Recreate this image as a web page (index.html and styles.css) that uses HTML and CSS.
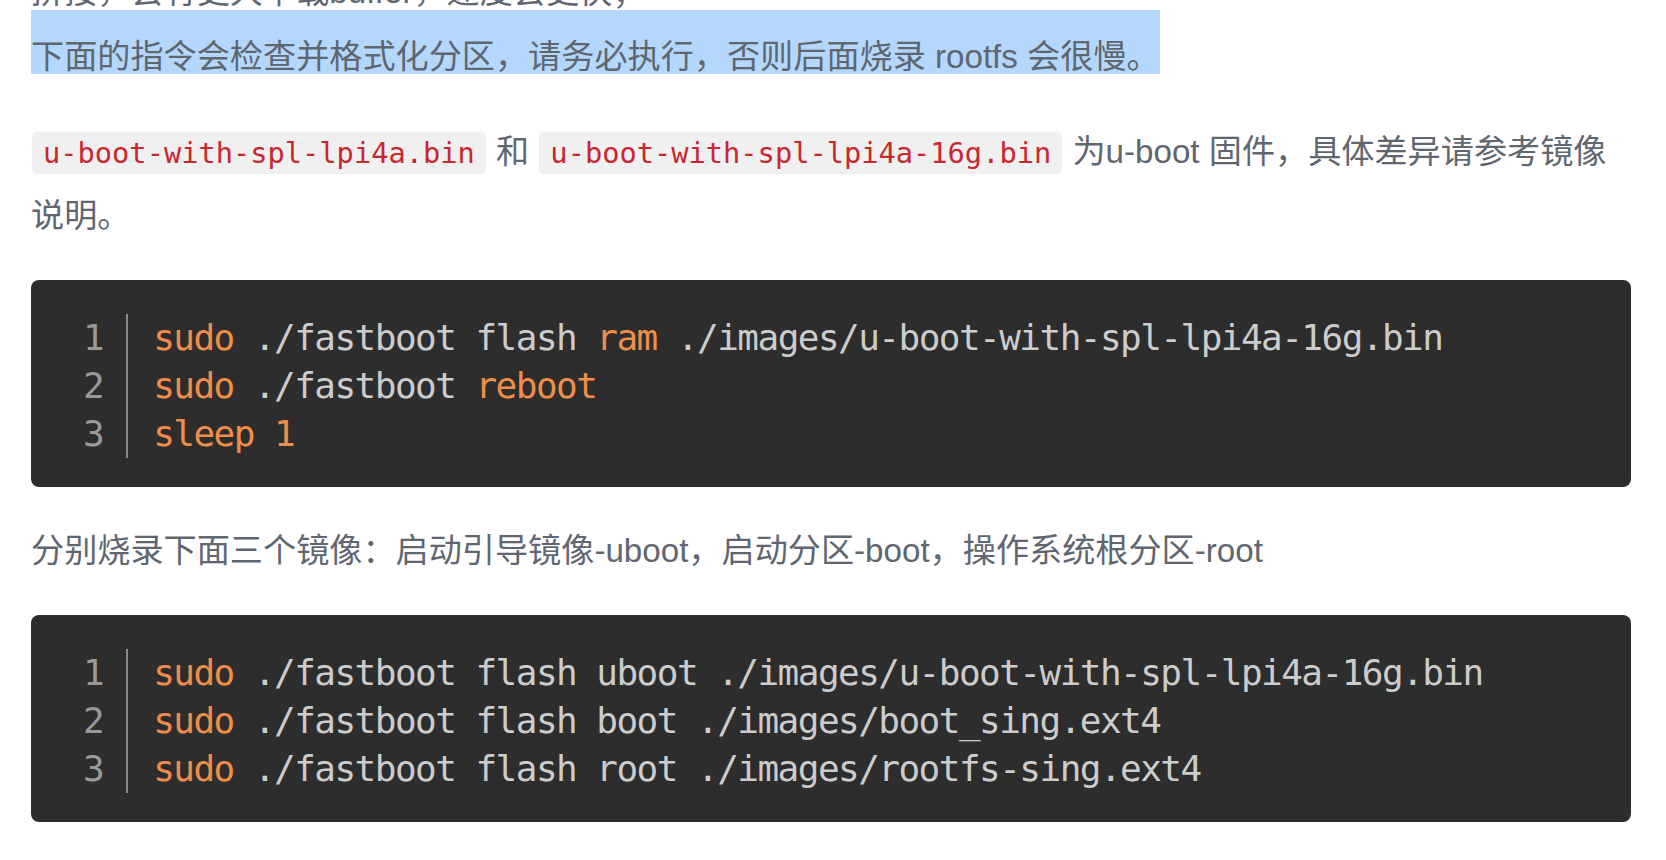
FILE: index.html
```html
<!DOCTYPE html>
<html lang="zh-CN">
<head>
<meta charset="utf-8">
<title>烧录镜像</title>
<link rel="stylesheet" href="styles.css">
</head>
<body>
<div class="doc">
  <p class="para">拼接，会有更大下载buffer，速度会更快；<br><span class="sel">下面的指令会检查并格式化分区，请务必执行，否则后面烧录 rootfs 会很慢。</span></p>
  <p class="para"><code class="ic">u-boot-with-spl-lpi4a.bin</code> 和 <code class="ic">u-boot-with-spl-lpi4a-16g.bin</code> 为u-boot 固件，具体差异请参考镜像说明。</p>
  <div class="code">
    <div class="gutter"><span>1</span><span>2</span><span>3</span></div>
    <pre class="lines"><span class="k">sudo</span> ./fastboot flash <span class="k">ram</span> ./images/u-boot-with-spl-lpi4a-16g.bin
<span class="k">sudo</span> ./fastboot <span class="k">reboot</span>
<span class="k">sleep</span> <span class="k">1</span></pre>
  </div>
  <p class="para">分别烧录下面三个镜像：启动引导镜像-uboot，启动分区-boot，操作系统根分区-root</p>
  <div class="code">
    <div class="gutter"><span>1</span><span>2</span><span>3</span></div>
    <pre class="lines"><span class="k">sudo</span> ./fastboot flash uboot ./images/u-boot-with-spl-lpi4a-16g.bin
<span class="k">sudo</span> ./fastboot flash boot ./images/boot_sing.ext4
<span class="k">sudo</span> ./fastboot flash root ./images/rootfs-sing.ext4</pre>
  </div>
</div>
</body>
</html>
```

FILE: styles.css
```css
html, body {
  margin: 0;
  padding: 0;
  background: #ffffff;
}

body {
  font-family: "Liberation Sans", "Noto Sans CJK SC", sans-serif;
  font-size: 33.15px;
  color: #5f6670;
  overflow: hidden;
}

.doc {
  width: 1600px;
  margin-top: -40px;
  padding-left: 31px;
}

.para {
  margin: 0 0 32px;
  line-height: 64px;
}

.sel {
  background: #b4d7fd;
  padding-top: 27.5px;
}

.ic {
  display: inline-block;
  margin: 0 1px;
  font-family: "DejaVu Sans Mono", monospace;
  font-size: 28.7px;
  line-height: 34px;
  color: #c8282d;
  background: #f0f0f0;
  border-radius: 5px;
  padding: 4px 11px;
}

.code {
  display: flex;
  margin: 0 0 32px;
  padding: 34px 0 29px 52px;
  background: #2d2d2d;
  border-radius: 8px;
  font-family: "DejaVu Sans Mono", monospace;
  font-size: 36px;
  letter-spacing: -1.53px;
  line-height: 48px;
}

.gutter {
  display: flex;
  flex-direction: column;
  align-items: flex-end;
  padding-right: 23px;
  border-right: 2px solid #8a8a8a;
  color: #999999;
}

.lines {
  margin: 0;
  padding-left: 25px;
  font: inherit;
  color: #cccccc;
  white-space: pre;
}

.k {
  color: #f08d49;
}
```
